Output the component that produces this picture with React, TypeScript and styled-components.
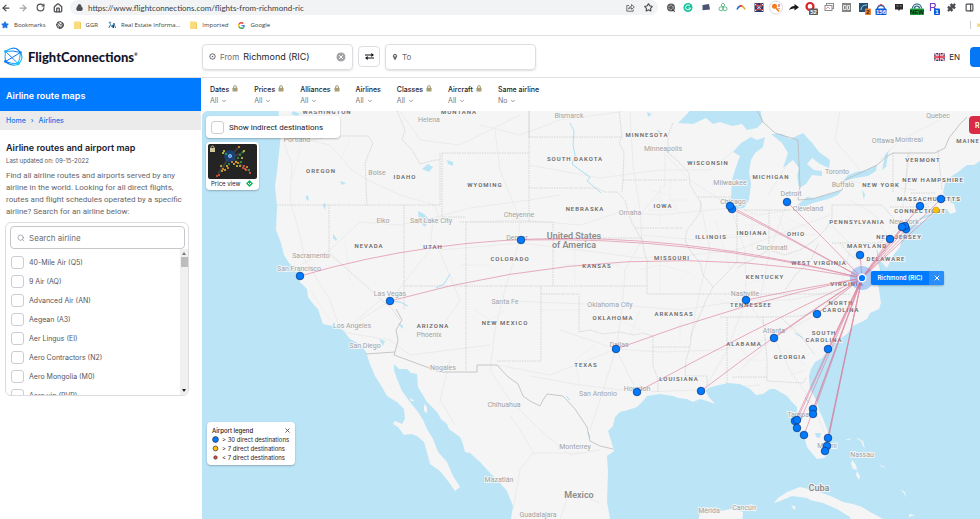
import React from "react";
import styled, { createGlobalStyle, css } from "styled-components";
import {
  ArrowLeft, ArrowRight, RotateCw, House, Lock, Star, Search, ChevronDown, X,
  CircleX, Puzzle, PanelRight, Earth,
} from "lucide-react";

const GlobalStyle = createGlobalStyle`
  *, *::before, *::after { box-sizing: border-box; }
  body { margin: 0; background: #fff; font-family: Inter, "Liberation Sans", sans-serif; color: #22222c; overflow: hidden; }
  button, input { font: inherit; color: inherit; margin: 0; padding: 0; border: 0; background: none; }
  button { cursor: pointer; }
  a { color: inherit; text-decoration: none; }
  h1, h2, p, ul { margin: 0; padding: 0; }
  ul { list-style: none; }
`;

const Page = styled.div`
  display: flex;
  flex-direction: column;
  height: 100vh;
  overflow: hidden;
`;

/* ---------- browser chrome ---------- */

const AddressRow = styled.div`
  display: flex;
  align-items: center;
  height: 15px;
  flex: none;
`;

const NavButtons = styled.div`
  display: grid;
  grid-template-columns: repeat(4, 1fr);
  width: 70px;
  margin-left: -3px;
`;

const IconButton = styled.button`
  display: flex;
  align-items: center;
  justify-content: center;
  color: ${(p) => p.color || "#4a4d51"};
`;

const AddressPill = styled.div`
  display: flex;
  align-items: center;
  gap: 5px;
  flex: 1;
  height: 15px;
  margin-left: 3px;
  padding: 0 5px 0 6px;
  border-radius: 8px;
  background: #f1f3f4;
  color: #4a4d51;
`;

const PillActions = styled.div`
  display: flex;
  gap: 9px;
`;

const AddressInput = styled.input`
  flex: 1;
  min-width: 0;
  outline: 0;
  font: 8px Lato, sans-serif;
  color: #3c4043;
`;

const Extensions = styled.div`
  display: grid;
  grid-auto-flow: column;
  grid-auto-columns: 1fr;
  flex: 0 0 316px;
  margin: 0 2px 0 4px;
`;

const BookmarkRow = styled.nav`
  display: flex;
  align-items: center;
  gap: 10px;
  height: 21px;
  flex: none;
  padding-left: 1px;
  border-bottom: 1px solid #dfe1e4;
  font: 6px "Open Sans", sans-serif;
  color: #3c4043;
`;

const Bookmark = styled.a`
  display: flex;
  align-items: center;
  gap: 5px;
`;

const BookmarkEnd = styled.span`
  display: flex;
  align-items: center;
  margin-left: auto;
  height: 8px;
  border-left: 1px solid #c9ccd0;
  padding-left: 6px;
  width: 10px;
  overflow: hidden;
`;

/* ---------- site header ---------- */

const Header = styled.header`
  display: flex;
  align-items: center;
  height: 42px;
  flex: none;
  border-bottom: 1px solid #e2e2e4;
  overflow: hidden;
`;

const Brand = styled.a`
  display: flex;
  align-items: center;
  gap: 5px;
  width: 202px;
  padding-left: 3px;
  flex: none;
  font: 900 13px Lato, sans-serif;
  color: #14142b;
`;

const Trademark = styled.sup`
  font-size: 4px;
  vertical-align: 6px;
`;

const Field = styled.label`
  display: flex;
  align-items: center;
  gap: 4px;
  width: 151px;
  height: 26px;
  padding: 0 5px 0 6px;
  border: 1px solid #dedee2;
  border-radius: 4px;
  box-shadow: 0 1px 2px rgba(0, 0, 0, 0.12);
  font-size: 8px;
  color: #6c6c72;
`;

const FieldInput = styled.input`
  flex: 1;
  min-width: 0;
  outline: 0;
  font-size: 9px;
  color: #25252d;
`;

const SwapButton = styled.button`
  display: flex;
  align-items: center;
  justify-content: center;
  width: 22px;
  height: 21px;
  margin: 0 5px;
  border: 1px solid #dedee2;
  border-radius: 4px;
`;

const Language = styled.button`
  display: flex;
  align-items: center;
  gap: 4px;
  margin-left: auto;
  font-size: 8px;
`;

const AccountButton = styled.button`
  width: 60px;
  height: 20px;
  margin: 0 -50px 0 10px;
  border-radius: 4px;
  background: #0577f5;
`;

/* ---------- body ---------- */

const Body = styled.div`
  display: flex;
  flex: 1;
  min-height: 0;
`;

const Sidebar = styled.aside`
  width: 201px;
  flex: none;
`;

const SidebarTitle = styled.h1`
  display: flex;
  align-items: center;
  height: 33px;
  padding: 2px 6px 0;
  background: #007aff;
  color: #fff;
  font-size: 9px;
  font-weight: 600;
`;

const Breadcrumb = styled.nav`
  display: flex;
  align-items: center;
  gap: 5px;
  height: 19px;
  padding: 0 6px;
  background: #ebebeb;
  color: #1673e8;
  font-size: 7px;
  font-weight: 500;
`;

const Intro = styled.section`
  padding: 12px 6px 4px;
`;

const IntroTitle = styled.h2`
  font-size: 9px;
  line-height: 12px;
  font-weight: 600;
`;

const Updated = styled.p`
  margin-top: 2px;
  font-size: 6px;
  line-height: 10px;
  color: #55555c;
`;

const Lead = styled.p`
  margin-top: 4px;
  font: 8px/12px Roboto, sans-serif;
  white-space: nowrap;
  color: #66666c;
`;

const Picker = styled.section`
  margin: 0 12px 0 5px;
  height: 174px;
  display: flex;
  flex-direction: column;
  border: 1px solid #dcdce0;
  border-radius: 6px;
  overflow: hidden;
`;

const SearchBox = styled.label`
  display: flex;
  align-items: center;
  gap: 4px;
  flex: none;
  height: 23px;
  margin: 3px 3px 0 4px;
  padding: 0 6px;
  border: 1px solid #c6c6cb;
  border-radius: 4px;
  color: #8a8a90;
`;

const SearchInput = styled.input`
  flex: 1;
  min-width: 0;
  outline: 0;
  font-size: 8px;
  &::placeholder { color: #6e6e74; opacity: 1; }
`;

const PickerBody = styled.div`
  display: flex;
  flex: 1;
  min-height: 0;
`;

const AirlineList = styled.ul`
  flex: 1;
  overflow: hidden;
  padding: 4px 0 0 5px;
`;

const CheckRow = styled.label`
  display: flex;
  align-items: center;
  gap: 5px;
  height: 19px;
  font-size: 7px;
  color: #55555c;
`;

const Checkbox = styled.input.attrs({ type: "checkbox" })`
  appearance: none;
  flex: none;
  width: 13px;
  height: 13px;
  border: 1px solid #cdcdd2;
  border-radius: 3px;
  background: #fff;
  &:checked { background: #007aff; }
`;

const ScrollTrack = styled.div`
  display: flex;
  flex-direction: column;
  align-items: center;
  width: 8px;
  padding: 3px 0;
  background: #f0f0f0;
`;

const ScrollThumb = styled.div`
  width: 7px;
  height: 10px;
  margin: 2px 0 auto;
  background: #bdbdbd;
`;

const Main = styled.main`
  display: flex;
  flex-direction: column;
  flex: 1;
  min-width: 0;
`;

const FilterBar = styled.div`
  display: flex;
  gap: 16px;
  height: 33px;
  flex: none;
  padding: 7px 9px 0;
`;

const FilterButton = styled.button`
  display: flex;
  flex-direction: column;
  align-items: flex-start;
  font-size: 7px;
  line-height: 10px;
  font-weight: 500;
  white-space: nowrap;
`;

const FilterName = styled.span`
  display: flex;
  gap: 3px;
`;

const FilterValue = styled.span`
  display: flex;
  align-items: center;
  gap: 3px;
  line-height: 12px;
  font-weight: 400;
  color: #77777d;
`;

const MapArea = styled.div`
  position: relative;
  flex: 1;
  min-height: 0;
  margin-left: 1px;
  overflow: hidden;
  border-top-left-radius: 6px;
  background: #bbe5f6;
`;

const MapCanvas = styled.svg`
  display: block;
  width: 100%;
  height: 100%;
  font-family: Roboto, sans-serif;
`;

const floating = css`
  position: absolute;
  background: #fff;
  border-radius: 4px;
  box-shadow: 0 1px 2px rgba(0, 0, 0, 0.25);
`;

const IndirectToggle = styled.label`
  ${floating}
  top: 5px;
  left: 4px;
  display: flex;
  align-items: center;
  gap: 5px;
  width: 134px;
  height: 22px;
  padding-left: 5px;
  font: 8px Roboto, sans-serif;
`;

const PriceCard = styled.button`
  ${floating}
  top: 31px;
  left: 4px;
  width: 53px;
  padding: 2px;
  font-size: 6px;
`;

const PriceCaption = styled.span`
  display: flex;
  align-items: center;
  justify-content: space-between;
  height: 9px;
  padding: 0 4px 0 3px;
`;

const PriceThumbnail = styled.svg`
  display: block;
  width: 49px;
  height: 35px;
`;

const Legend = styled.section`
  ${floating}
  left: 5px;
  top: 311px;
  width: 88px;
  padding: 3px 4px 3px 5px;
  font-size: 6px;
`;

const LegendHead = styled.div`
  display: flex;
  justify-content: space-between;
  align-items: center;
  height: 10px;
  font-weight: 500;
`;

const LegendRow = styled.li`
  display: flex;
  align-items: center;
  gap: 3px;
  height: 9px;
  white-space: nowrap;
`;

const LegendKey = styled.svg`
  width: 7px;
  height: 7px;
  flex: none;
`;

const PinLabel = styled.div`
  position: absolute;
  left: 669px;
  top: 160px;
  display: flex;
  height: 14px;
  border-radius: 2px;
  overflow: hidden;
  background: #007aff;
  color: #fff;
  font-size: 6px;
  font-weight: 600;
  line-height: 14px;
  box-shadow: 0 1px 2px rgba(0, 0, 0, 0.25);
`;

const PinName = styled.span`
  width: 58px;
  text-align: center;
`;

const PinClose = styled.button`
  display: flex;
  align-items: center;
  justify-content: center;
  width: 15px;
  background: #2b8dfa;
`;

const RouteButton = styled.button`
  position: absolute;
  left: 767px;
  top: 5px;
  width: 60px;
  height: 18px;
  padding-left: 6px;
  border-radius: 4px;
  background: #d92b45;
  color: #fff;
  font-size: 7px;
  font-weight: 600;
  text-align: left;
`;

/* ---------- small drawings ---------- */

const Padlock = () => (
  <svg width="6" height="7" viewBox="0 0 6 7">
    <path d="M1.6 3V2a1.4 1.4 0 0 1 2.8 0v1" fill="none" stroke="#a89f78" />
    <rect x=".5" y="2.8" width="5" height="3.7" rx=".5" fill="#a89f78" />
  </svg>
);

const ShareMark = () => (
  <svg width="9" height="9" viewBox="0 0 9 9" fill="none" stroke="#5f6368" strokeWidth=".9">
    <path d="M3 2.500H.8v5.700h6.400V6.500" />
    <path d="M2.500 6Q3 3.500 5.500 3.300V1.500L8.300 4 5.500 6.300V4.800Q3.700 4.800 2.500 6z" strokeLinejoin="round" />
  </svg>
);

const SwapMark = () => (
  <svg width="9" height="7" viewBox="0 0 9 7">
    <path d="M0 2h7M2 5h7" stroke="#111" strokeWidth="1.200" />
    <path d="M6.300 0L9 2 6.300 4zM2.700 3L0 5l2.700 2z" fill="#111" />
  </svg>
);

const Folder = () => (
  <svg width="7" height="8" viewBox="0 0 7 8">
    <path d="M0 .5h5.500L7 1.500V8H0z" fill="#fbdc7c" />
    <path d="M6 1.500h1V8H6z" fill="#efc95c" />
  </svg>
);

const GoogleMark = () => (
  <svg width="7" height="7" viewBox="0 0 48 48">
    <path fill="#EA4335" d="M24 9.500c3.500 0 6.700 1.200 9.200 3.600l6.900-6.900C35.900 2.400 30.500 0 24 0 14.600 0 6.500 5.400 2.600 13.200l8 6.200C12.400 13.700 17.700 9.500 24 9.500z" />
    <path fill="#4285F4" d="M47 24.500c0-1.600-.2-3.100-.4-4.500H24v9h12.900c-.6 3-2.200 5.500-4.700 7.200l7.700 6C44.400 38 47 31.800 47 24.500z" />
    <path fill="#FBBC05" d="M10.500 28.600a14.500 14.500 0 0 1 0-9.200l-8-6.200a24 24 0 0 0 0 21.600z" />
    <path fill="#34A853" d="M24 48c6.500 0 11.900-2.100 15.900-5.800l-7.700-6c-2.200 1.500-4.900 2.300-8.200 2.300-6.300 0-11.600-4.200-13.500-9.900l-8 6.200C6.500 42.600 14.600 48 24 48z" />
  </svg>
);

const PeopleMark = () => (
  <svg width="8" height="8" viewBox="0 0 8 8">
    <g fill="none" stroke="#3a78a8">
      <path d="M.8 7L2.500 3.500 4 6 6 2l1.500 5" />
      <circle cx="2" cy="1.700" r=".7" />
    </g>
    <path d="M4.500 7V4.500L6 3.500V7z" fill="#174a73" />
  </svg>
);

const BrandMark = () => (
  <svg width="20" height="20" viewBox="0 0 20 20">
    <defs>
      <linearGradient id="brand" gradientUnits="userSpaceOnUse" x1="1" y1="3" x2="18" y2="17">
        <stop offset="0" stopColor="#21c8f7" />
        <stop offset=".45" stopColor="#0f6cf4" />
        <stop offset="1" stopColor="#21d3f7" />
      </linearGradient>
    </defs>
    <g fill="none" stroke="url(#brand)">
      <path d="M2.500 4.500Q8 0 13 1.500 18 4 19 10 18.500 15 14.500 17.500 8 19.500 2.500 14.500" strokeWidth="1.200" />
      <path d="M2.500 4.500L15 16.500M2.500 4.500Q1.500 10 2.500 14.500M2.500 14.500L17.500 5.500M17.500 5.500Q17 12 15 16.500M2.500 14.500Q8 17 15 16.500M2.500 4.500Q10 3 17.500 5.500" />
    </g>
    <g fill="#0b7df0">
      <circle cx="2.500" cy="4.500" r="1.400" fill="#1fb4f5" /><circle cx="2.500" cy="14.500" r="1.400" />
      <circle cx="17.500" cy="5.500" r="1.200" /><circle cx="15" cy="16.500" r="1.800" fill="#1fc4f5" />
    </g>
  </svg>
);

const BritishFlag = () => (
  <svg width="11" height="8" viewBox="0 0 11 8">
    <rect width="11" height="8" rx="1" fill="#1f3a7d" />
    <path d="M0 0l11 8M11 0L0 8" stroke="#fff" strokeWidth="1.600" />
    <path d="M0 0l11 8M11 0L0 8" stroke="#d8213b" strokeWidth=".6" />
    <path d="M5.500 0v8M0 4h11" stroke="#fff" strokeWidth="2.600" />
    <path d="M5.500 0v8M0 4h11" stroke="#d8213b" strokeWidth="1.500" />
  </svg>
);

const OriginMark = () => (
  <svg width="7" height="7" viewBox="0 0 7 7" fill="none" stroke="#55555c">
    <circle cx="3.500" cy="3.500" r="2.700" strokeWidth=".9" />
    <circle cx="3.500" cy="3.500" r=".8" fill="#55555c" stroke="none" />
  </svg>
);

const PlaceMark = () => (
  <svg width="6" height="8" viewBox="0 0 6 8">
    <path d="M3 7.500L1.200 4.300a2.200 2.200 0 1 1 3.600 0z" fill="#66666c" />
    <circle cx="3" cy="2.800" r=".9" fill="#fff" />
  </svg>
);

type BadgeProps = { x: number; w: number; fill: string; children: string; ink?: string };
const Badge = ({ x, w, fill, children, ink = "#fff" }: BadgeProps) => (
  <g>
    <rect x={x} y="8.500" width={w} height="6.500" rx=".8" fill={fill} />
    <text x={x + w / 2} y="13.900" textAnchor="middle" fontSize="6" fontWeight="700" fill={ink} fontFamily="Liberation Sans, sans-serif">{children}</text>
  </g>
);

const extensionIcons: { name: string; art: React.ReactNode }[] = [
  { name: "Shutter", art: <g><circle cx="8" cy="7.500" r="4" fill="#5d5d5d" /><circle cx="8" cy="7.500" r="2.200" fill="none" stroke="#ddd" strokeDasharray="1.200 1" /><path d="M9 10l3 1.500" stroke="#333" /></g> },
  { name: "Grammar", art: <g><circle cx="8" cy="7.500" r="4.500" fill="#15c39a" /><path d="M10 5.800A2.500 2.500 0 1 0 10.500 8H8.500" fill="none" stroke="#fff" /></g> },
  { name: "Notes", art: <path d="M4.500 5l6.500-1 1 5.500-7.500.8z" fill="#4b5472" /> },
  { name: "Rings", art: <g fill="none" stroke="#3faa72" strokeWidth=".8"><path d="M8 3L10 5 8 7 6 5z" /><circle cx="6" cy="8.800" r="2" /><circle cx="10" cy="8.800" r="2" /></g> },
  { name: "Rainbow", art: <g fill="none" strokeWidth="1.600"><path d="M4 9.500Q5 7 7 6" stroke="#1d6fd6" /><path d="M6.500 6.300Q8 5.500 9.500 6.300" stroke="#e33" /><path d="M9.300 6.200Q11 7 12 9.500" stroke="#f0a325" /></g> },
  { name: "Grid", art: <g><rect x="3.500" y="3" width="9" height="9" fill="#243a72" /><path d="M4 4l8 7M12 4l-8 7" stroke="#f1f1f1" /><path d="M4 5.500h8M4 9.500h8M6 3v9M10 3v9" stroke="#d8443c" strokeDasharray="2 1" /></g> },
  { name: "Key", art: <g><circle cx="8" cy="7.500" r="6.500" fill="#fff" stroke="#dadada" /><circle cx="6.500" cy="6.300" r="2.500" fill="#f47b15" /><path d="M8 8l3 3.500" stroke="#f47b15" strokeWidth="1.700" /><path d="M11 4v3M11 8v1" stroke="#d33" /></g> },
  { name: "Forward", art: <path d="M3 10q1.500-4 5.500-4V4l4.500 3.300-4.500 3.200v-2Q5 8.300 3 10z" fill="#1b1b1b" /> },
  { name: "Blocker", art: <g><circle cx="7" cy="6.500" r="3.500" fill="none" stroke="#d8232a" strokeWidth="2.200" /><Badge x={6} w={9} fill="#5a5a5a">52</Badge></g> },
  { name: "Gallery", art: <g fill="#fff" stroke="#8b8b8b"><rect x="5.500" y="3.500" width="7" height="5" /><rect x="4" y="5.500" width="7" height="5" /><path d="M5 9l2-2 2 2" stroke="#d99" /></g> },
  { name: "Pages", art: <g><rect x="4" y="3" width="9" height="9" fill="#858585" /><path d="M5.500 5.500h2.500v4H5.500zM9.500 5.500h2v4h-2z" fill="none" stroke="#e6e6e6" /></g> },
  { name: "Contacts", art: <g><rect x="3" y="3" width="9" height="9" fill="#22506f" /><path d="M5 10q0-5 6-5" fill="none" stroke="#9fd0e8" /><Badge x={9} w={6} fill="#f08030" ink="#222">2</Badge></g> },
  { name: "Vault", art: <g><path d="M4.500 9a3.500 3.500 0 0 1 7 0" fill="none" stroke="#1a66d6" strokeWidth="1.500" /><path d="M5 6.500Q8 2.500 11 6.500" fill="none" stroke="#d33b3b" /><Badge x={2.5} w={11} fill="#0b5cd8">156</Badge></g> },
  { name: "Screen", art: <g><path d="M4 4h8v5.500H9L8 11 7 9.500H4z" fill="#2b2b2b" /><path d="M5.500 6h2M9 6h1.500" stroke="#999" /></g> },
  { name: "Signal", art: <g><path d="M3.500 8.500a4.500 4.500 0 0 1 9 0M5.500 8.500a2.500 2.500 0 0 1 5 0" fill="none" stroke="#165c7a" strokeWidth="1.200" /><Badge x={1} w={14} fill="#18953b" ink="#0a1f10">NEW</Badge></g> },
  { name: "Reader", art: <g><path d="M4.500 11V3.500h4q2 2-.5 4h-3M8 7.500l3 3.500" fill="none" stroke="#7a3fc4" strokeWidth="1.200" /><Badge x={8} w={6} fill="#0b5cd8">1</Badge></g> },
];

const Extension = styled(IconButton)`
  svg { overflow: visible; }
`;

/* ---------- map data ---------- */

const PACIFIC = "M100 100H278L279 120 281 134 279 153 277 172 275 186 276 196 277 207 276 230 281 243 284 255 289 263 297 270 300 282 307 289 308 297 314 305 318 309 323 324 333 326 343 330 350 339 360 344 366 352 370 364 375 376 382 387 387 396 397 402 404 409 405 419 402 424 395 421 393 424 398 427 404 435 411 434 417 436 424 442 428 456 430 464 440 471 448 481 455 491 460 487 453 476 447 462 438 452 433 439 427 429 423 420 418 412 410 402 402 391 397 379 394 370 394 364 399 369 407 369 411 373 417 374 418 387 427 402 437 412 441 419 447 424 449 429 460 437 463 444 465 452 470 453 480 462 493 476 501 484 507 491 513 506 511 519V700H100Z";
const ATLANTIC = "M610 519L607 502 608 472 607 456 614 451 610 437 608 431 613 426 615 417 620 412 628 410 637 407 643 401 647 396 660 394 673 396 678 398 687 399 693 402 700 399 707 401 715 404 708 396 706 391 708 388 715 386 728 383 740 384 750 389 756 395 763 394 770 389 775 389 787 396 792 402 797 407 797 419 800 431 805 439 807 447 810 451 817 459 824 458 828 454 829 442 828 432 822 416 819 410 817 402 810 389 809 376 811 369 815 362 822 358 827 352 835 342 847 334 853 326 867 319 870 313 879 309 881 303 879 290 877 278 880 270 878 257 884 265 887 268 892 257 900 247 903 233 908 227 913 223 920 218 933 212 947 209 950 214 956 212 954 204 949 202 943 193 945 183 953 175 958 172 967 165 974 165 980 161 2400 150V900H610Z";
const ISLANDS = [
  "M698 521L700 514 720 511 731 509 743 512 742 525Z",
  "M774 503L778 498 787 492 800 487 817 491 833 497 843 502 853 504 862 507 870 512 883 519 900 530H853L850 517 837 509 823 503 810 500 807 498 792 496 780 501Z",
  "M791 505l5 2-2 3z", "M852 460l4 5 1 5-4-1-2-5z", "M857 471l3 5-1 4-3-5z", "M845 440l7-2-3 2zM857 438l6 3 2 8-2-3-2-5-4-2zM878 463l4 4 5 1-5-2zM900 489l5 3 1 6-2-5zM909 514l6 1-6 2z",
  "M909 226L920 220 934 215 922 222Z", "M410 398l5 3-4 0zM424 404l3 3 0 6-3-2z",
];
const LAKES = [
  "M678 123L688 113 698 100H758L763 122 757 128 747 130 742 124 732 126 720 122 713 124 706 118 693 124Z",
  "M733 152L741 143 751 137 757 140 765 137 763 147 755 153 751 160 749 172 751 184 749 200 744 208 735 209 731 198 732 180 735 170 740 156Z",
  "M771 134L782 134 790 139 803 133 813 144 819 152 830 160 829 168 820 164 812 158 807 164 814 170 822 171 822 176 812 175 806 184 799 188 797 176 799 168 793 160 783 168 788 153 782 143Z",
  "M795 207L801 202 807 197 815 198 825 195 842 190 838 195 828 199 813 203 802 208Z",
  "M843 181L848 175 856 172 866 170 877 165 876 171 868 176 856 178Z",
  "M422 169l6-5 5 3-4 5zM306 195l3 2-1 4-2-2zM324 203l2 1-1 6-2-4zM333 234l4 5-1 2-3-3zM447 160l6 2 0 4-5-2zM340 181l6 2-4 2zM418 211l6 3 5 5-4 8-6-6zM293 111l8 3-5 2-5-2zM647 112l5 2-4 3zM657 130l4 1-2 3zM379 339l6 2-2 5zM398 322l5 4 0 3-3-3zM815 433l6 0-1 5-4-1z",
  "M882 170L885 155 889 150 886 167ZM862 190l3 4-1 6-1-4z",
];
const RIVERS = "M570 123l4 8-1 14 2 10-3 9 8 6 10 7-3 4 5 4 9 8M450 274l-6 10-8 4M390 301l10 1 8 4M795 333l8 5M566 396l4 4M588 432l2 6M877 250l2 14 3 8M805 397l4 6";
const STATES = "M283 135L313 140 330 136H368L373 143 365 163 367 205M277 205H440V205M329 205V253L392 309 400 320M404 205V309M404 286H647M440 205V153M397 111L405 130 402 140 412 150 420 164 435 160 440 160M442 153H529M442 153V217H466M529 100V222M460 222H553V286M466 222V286M529 137H622M618 100L622 137 619 143 624 152 623 180 622 192M529 188H597L605 192 617 192 625 200 628 212 632 223 642 240 645 255 647 260V294H703M466 286V371M541 286V361H497M541 294H579V332L590 330 603 334 620 332 634 335 643 333 653 336V366L658 379V392M553 238H642M623 180H688M673 123L668 135 668 153 677 160 689 173 690 185 701 203 700 213 687 230 685 240 690 250 700 263 703 275 713 287 706 300 703 308 692 332 690 347 686 360 685 376H707V385M653 347H690M635 228H683M698 197H733M529 111V137M737 213V262L725 275 713 287M769 210V250L755 258 737 268M769 250L785 255 800 250 815 240 826 229 832 218V205H882L895 220M832 243H885V260M744 210H790M703 294H850M720 317H780L800 316 815 312M727 317V384M763 317L767 359V381L803 383 806 378M733 377H767M780 317L800 335 815 355M880 243L888 236M818 244L810 262 795 275 785 290M893 153V193M908 153L905 193M911 193H935M890 207H930M938 150L942 190M840 243L850 255 862 262";
const BORDERS = "M366 354L395 352 394 355 432 369 440 372H477V365H497L507 376 518 384 523 396 530 401 540 406 543 400 547 394 563 396 575 409 587 427 590 441 600 446 613 449M395 352L398 340 396 330 402 320 396 309M752 100L763 122 775 133 798 140 800 187 798 200 812 199 842 190 845 180 877 165 886 157 893 153H935L945 148 949 138 960 124 967 117";
const ROADS = "M283 140L292 165 290 200 300 235 305 260 330 300 340 330M285 135L330 145 352 170 368 180 400 195 435 205 440 222M300 265L330 250 360 222 400 225 425 220 470 208 529 200 560 195M433 220L430 250 410 275 390 301 360 320M330 330L390 340 410 355 450 350 490 345M340 335L380 300M480 125L520 135 560 120 620 112M400 111L420 140 460 145 520 115M495 130L500 170 520 220 518 245 505 290 495 330 490 370 510 400 540 430 570 455 600 450M470 222L520 220 580 225 620 212 660 215 730 208M440 250L520 243 580 250 640 258 690 255 737 250 790 230 830 215M529 165L600 178 660 170 710 170 735 150M630 112L633 165 640 210 642 240 625 270 622 310 616 349 600 400 590 430M490 300L560 303 620 305 680 310 746 300 790 300 840 290M560 330L616 349 660 352 720 350 774 338 817 314 862 278M497 365L550 375 616 349M530 376L580 385 637 392 700 390 760 385M616 349L637 392M663 152L690 180 730 206 760 215 800 208M730 206L745 250 746 300 727 350 705 388M768 195L790 160 785 140M640 215L665 185 665 155M700 200L710 250 700 290 690 340M774 338L790 370 810 400 828 440M746 300L774 338 740 370M787 202L770 250 760 300M832 225L860 255 900 228 920 206 941 199M842 180L880 185 915 190M850 250L840 290 817 314M880 160L900 140 940 120M860 170L835 140 840 111M900 228L905 190 910 150M890 240L875 215 850 200M640 235L700 240 760 235M435 240L460 300 440 330M513 510L520 470 533 453 580 453M535 455L520 430 510 415M560 519L570 490 600 503M450 360L440 400 455 425M333 111L300 113";
const DETAIL = "M650 190l20 5 10 20M660 185v40M670 180v30M650 200h40M648 210h30M715 220l10 30 5 20M710 235h25M745 225h24M752 213v45M778 215l12 30M775 235h40M790 220l25 10M640 270l20-5 30 8M660 255v40M620 320l20 10M595 345l-20 15 5 25M680 320v20M735 340l15 20M735 360h30M785 350l20 15M790 375l15-5M720 300l20 10M845 225h30M845 215l25 15M640 310l-10 25M540 310h40M475 310l15 10 15-10M460 265h30M560 265h60M575 245v40M480 180l20 8M350 140l-10 20M300 150l-8 30M345 240l5 40M310 290l20 30M780 265l20-12M745 285l30-12";

const RIC = { x: 862, y: 278 };
type Stop = { x: number; y: number; lift?: number; cx?: number };
const stops: Stop[] = [
  { x: 300, y: 276, cx: 560, lift: 200 }, { x: 390, y: 301, cx: 630, lift: 234 }, { x: 521, y: 240, cx: 690, lift: 236 },
  { x: 616, y: 349, cx: 742, lift: 302 }, { x: 637, y: 392, cx: 755, lift: 328 }, { x: 701, y: 391, cx: 782, lift: 329 },
  { x: 746, y: 300 }, { x: 774, y: 338 }, { x: 817, y: 314 }, { x: 828, y: 349 }, { x: 787, y: 202 },
  { x: 732, y: 209 }, { x: 730, y: 206 }, { x: 860, y: 255 }, { x: 890, y: 239 }, { x: 906, y: 229 }, { x: 905, y: 226 }, { x: 902, y: 227 },
  { x: 920, y: 206 }, { x: 941, y: 199 }, { x: 813, y: 409 }, { x: 813, y: 414 }, { x: 795, y: 421 }, { x: 797, y: 420 },
  { x: 797, y: 428 }, { x: 804, y: 435 }, { x: 828, y: 438 }, { x: 827, y: 446 }, { x: 825, y: 451 },
];

const routePath = (s: Stop) =>
  `M${s.x} ${s.y}Q${s.cx ?? (s.x + RIC.x) / 2} ${s.lift ?? (s.y + RIC.y) / 2 - 1} ${RIC.x} ${RIC.y}`;

type Label = [number, number, string];
const stateLabels: Label[] = [
  [327, 114, "WASHINGTON"], [459, 114, "MONTANA"], [321, 173, "OREGON"], [405, 179, "IDAHO"], [485, 187, "WYOMING"],
  [575, 161, "SOUTH DAKOTA"], [647, 137, "MINNESOTA"], [708, 165, "WISCONSIN"], [771, 179, "MICHIGAN"], [881, 187, "NEW YORK"],
  [923, 162, "VERMONT"], [933, 182, "NEW HAMPSHIRE"], [929, 201, "MASSACHUSETTS"], [920, 213, "CONNECTICUT"], [968, 143, "MAINE"],
  [585, 211, "NEBRASKA"], [663, 208, "IOWA"], [369, 248, "NEVADA"], [433, 249, "UTAH"], [510, 261, "COLORADO"], [597, 268, "KANSAS"],
  [672, 260, "MISSOURI"], [711, 239, "ILLINOIS"], [752, 235, "INDIANA"], [796, 236, "OHIO"], [857, 224, "PENNSYLVANIA"],
  [867, 248, "MARYLAND"], [899, 239, "NEW JERSEY"], [886, 261, "DELAWARE"], [819, 265, "WEST VIRGINIA"], [765, 279, "KENTUCKY"],
  [847, 286, "VIRGINIA"], [751, 307, "TENNESSEE"], [841, 305, "NORTH"], [841, 312, "CAROLINA"], [433, 328, "ARIZONA"],
  [505, 325, "NEW MEXICO"], [613, 320, "OKLAHOMA"], [674, 316, "ARKANSAS"], [586, 367, "TEXAS"], [679, 381, "LOUISIANA"],
  [744, 346, "ALABAMA"], [790, 359, "GEORGIA"], [824, 335, "SOUTH"], [824, 342, "CAROLINA"],
];
const cityLabels: Label[] = [
  [429, 122, "Helena"], [297, 142, "Portland"], [377, 175, "Boise"], [569, 118, "Bismarck"], [663, 151, "Minneapolis"], [730, 185, "Milwaukee"],
  [938, 118, "Quebec"], [883, 143, "Ottawa"], [909, 142, "Montreal"], [837, 174, "Toronto"], [843, 187, "Buffalo"], [791, 196, "Detroit"],
  [808, 211, "Cleveland"], [733, 204, "Chicago"], [904, 224, "New York"], [772, 250, "Cincinnati"], [745, 296, "Nashville"], [383, 223, "Elko"],
  [431, 223, "Salt Lake City"], [519, 217, "Cheyenne"], [517, 240, "Denver"], [630, 215, "Omaha"], [311, 258, "Sacramento"],
  [299, 271, "San Francisco"], [390, 296, "Las Vegas"], [505, 304, "Santa Fe"], [610, 307, "Oklahoma City"], [352, 328, "Los Angeles"],
  [365, 348, "San Diego"], [429, 337, "Phoenix"], [443, 370, "Nogales"], [619, 347, "Dallas"], [637, 391, "Houston"], [598, 396, "San Antonio"],
  [504, 407, "Chihuahua"], [575, 449, "Monterrey"], [499, 482, "Mazatlán"], [538, 517, "Guadalajara"], [774, 333, "Atlanta"],
  [798, 417, "Tampa"], [827, 448, "Miami"], [862, 457, "Nassau"], [744, 510, "Cancún"], [709, 513, "Mérida"],
];
const countryLabels: Label[] = [[574, 239, "United States"], [574, 248, "of America"], [579, 498, "Mexico"], [819, 491, "Cuba"]];

const MapLabel = styled.text<{ $kind: "state" | "city" | "country" }>`
  text-anchor: middle;
  paint-order: stroke;
  stroke: rgba(247, 247, 247, 0.9);
  stroke-width: 2px;
  stroke-linejoin: round;
  ${(p) => p.$kind === "state" && css`font-size: 6px; font-weight: 600; letter-spacing: 1px; fill: #6a6a6a;`}
  ${(p) => p.$kind === "city" && css`font-size: 7px; fill: #a3a3a3;`}
  ${(p) => p.$kind === "country" && css`font-size: 9px; font-weight: 600; fill: #8c8c8c;`}
`;

const RouteMap = () => (
  <MapCanvas role="img" aria-label="Direct flights from Richmond">
    <g transform="translate(-202 -111)">
      <rect x="100" y="100" width="2400" height="800" fill="#f5f5f5" />
      <g fill="none" strokeLinejoin="round">
        <path d={DETAIL} stroke="#efefef" />
        <path d={ROADS} stroke="#ebebeb" />
      </g>
      <g fill="#bbe5f6">
        <path d={PACIFIC} /><path d={ATLANTIC} />
        {LAKES.map((d) => <path key={d} d={d} />)}
      </g>
      {ISLANDS.map((d) => <path key={d} d={d} fill="#f5f5f5" />)}
      <path d={RIVERS} fill="none" stroke="#aadff5" />
      <path d={STATES} fill="none" stroke="#c9c9c9" strokeDasharray="1.500 1" strokeWidth=".7" />
      <path d={BORDERS} fill="none" stroke="#bababa" strokeWidth=".8" />
      {cityLabels.map(([x, y, t]) => <MapLabel key={t} $kind="city" x={x} y={y}>{t}</MapLabel>)}
      {stateLabels.map(([x, y, t]) => <MapLabel key={t + y} $kind="state" x={x} y={y}>{t}</MapLabel>)}
      {countryLabels.map(([x, y, t]) => <MapLabel key={t} $kind="country" x={x} y={y}>{t}</MapLabel>)}
      <circle cx={RIC.x} cy={RIC.y} r="12" fill="#3c8cf5" opacity=".38" />
      <g fill="none" stroke="#d9698b" strokeWidth=".7" opacity=".75">
        {stops.map((s) => <path key={`${s.x}-${s.y}`} d={routePath(s)} />)}
        <path d={`M936 210L${RIC.x} ${RIC.y}`} />
      </g>
      <circle cx="936" cy="210" r="3" fill="#ffc107" stroke="#c79a1c" strokeWidth=".6" />
      <g fill="#007aff" stroke="#123f86" strokeWidth=".8">
        {stops.map((s) => <circle key={`${s.x}-${s.y}`} cx={s.x} cy={s.y} r="3.800" />)}
      </g>
      <circle cx={RIC.x} cy={RIC.y} r="3.800" fill="#007aff" stroke="#fff" strokeWidth="1.400" />
    </g>
  </MapCanvas>
);

const priceDots: [number, number, string][] = [
  [31, 3, "#f39b2d"], [16, 7, "#d8e03a"], [18, 10, "#2fae4a"], [15, 9, "#d8e03a"], [35, 8, "#2fae4a"], [36, 7, "#e0d337"], [32, 11, "#2fae4a"], [34, 14, "#e0d337"], [30, 14, "#2fae4a"],
  [28, 18, "#f2c230"], [26, 20, "#f2c230"], [30, 19, "#f39b2d"], [33, 18, "#2fae4a"], [32, 22, "#f2c230"], [29, 22, "#e0d337"], [24, 18, "#f39b2d"],
  [35, 24, "#f0583f"], [37, 25, "#f0583f"], [39, 23, "#f39b2d"], [38, 26, "#f0583f"], [41, 26, "#2fae4a"], [42, 29, "#f0583f"], [36, 22, "#f0583f"],
  [13, 22, "#f2c230"], [15, 25, "#f39b2d"], [14, 27, "#f2c230"], [17, 26, "#f2c230"], [20, 24, "#f39b2d"], [19, 22, "#e0d337"], [9, 32, "#f0583f"], [11, 31, "#f0583f"], [21, 20, "#2fae4a"],
];

const PriceThumb = () => (
  <PriceThumbnail viewBox="0 0 49 35">
    <rect width="49" height="35" rx="2" fill="#242424" />
    <path d="M10 30L22 12 42 28M16 8L24 13 36 8M31 3L22 12 14 25" stroke="#3c3c3c" fill="none" strokeWidth="2" />
    <circle cx="22" cy="12" r="6" fill="#1c4380" opacity=".8" />
    <circle cx="22" cy="12" r="1.600" fill="#3aa0ff" stroke="#bfe0ff" strokeWidth=".6" />
    {priceDots.map(([x, y, c]) => <circle key={`${x}-${y}`} cx={x} cy={y} r="1" fill={c} />)}
    <path d="M3 4.500V3.500a1.500 1.500 0 0 1 3 0v1" fill="none" stroke="#cfc79d" />
    <rect x="2" y="4" width="5" height="4" fill="#cfc79d" />
  </PriceThumbnail>
);

const filters = [
  { name: "Dates", value: "All", locked: true }, { name: "Prices", value: "All", locked: true },
  { name: "Alliances", value: "All", locked: true }, { name: "Airlines", value: "All", locked: false },
  { name: "Classes", value: "All", locked: true }, { name: "Aircraft", value: "All", locked: true },
  { name: "Same airline", value: "No", locked: false },
];

const airlines = [
  "40-Mile Air (Q5)", "9 Air (AQ)", "Advanced Air (AN)", "Aegean (A3)", "Aer Lingus (EI)",
  "Aero Contractors (N2)", "Aero Mongolia (M0)", "Aero vip (RVP)",
];

const legend = [
  { text: "> 30 direct destinations", fill: "#007aff", r: 2.9 },
  { text: "> 7 direct destinations", fill: "#ffc107", r: 2.4 },
  { text: "< 7 direct destinations", fill: "#f0452f", r: 1.7 },
];

export default function App() {
  return (
    <Page>
      <GlobalStyle />
      <AddressRow>
        <NavButtons>
          <IconButton aria-label="Back"><ArrowLeft size={10} strokeWidth={3} /></IconButton>
          <IconButton aria-label="Forward" color="#a0a3a7"><ArrowRight size={10} strokeWidth={3} /></IconButton>
          <IconButton aria-label="Reload"><RotateCw size={9} strokeWidth={3} /></IconButton>
          <IconButton aria-label="Home page"><House size={10} strokeWidth={3} /></IconButton>
        </NavButtons>
        <AddressPill>
          <Lock size={7} strokeWidth={3} fill="#4a4d51" />
          <AddressInput aria-label="Address" defaultValue="https://www.flightconnections.com/flights-from-richmond-ric" />
          <PillActions>
            <IconButton aria-label="Share"><ShareMark /></IconButton>
            <IconButton aria-label="Bookmark this page"><Star size={9} strokeWidth={3} /></IconButton>
          </PillActions>
        </AddressPill>
        <Extensions>
          {extensionIcons.map((e) => (
            <Extension key={e.name} aria-label={e.name}>
              <svg width="16" height="15" viewBox="0 0 16 15">{e.art}</svg>
            </Extension>
          ))}
          <Extension aria-label="Extensions"><Puzzle size={9} fill="#4a4d51" /></Extension>
          <Extension aria-label="Side panel"><PanelRight size={9} strokeWidth={3} /></Extension>
        </Extensions>
      </AddressRow>
      <BookmarkRow aria-label="Bookmarks">
        <Bookmark href="#"><Star size={8} color="#1a73e8" fill="#1a73e8" />Bookmarks</Bookmark>
        <Bookmark href="#" aria-label="Globe"><Earth size={8} strokeWidth={3} /></Bookmark>
        <Bookmark href="#"><Folder />GGR</Bookmark>
        <Bookmark href="#"><PeopleMark />Real Estate Informa...</Bookmark>
        <Bookmark href="#"><Folder />Imported</Bookmark>
        <Bookmark href="#"><GoogleMark />Google</Bookmark>
        <BookmarkEnd><Folder /></BookmarkEnd>
      </BookmarkRow>

      <Header>
        <Brand href="#"><BrandMark /><span>FlightConnections<Trademark>®</Trademark></span></Brand>
        <Field>
          <OriginMark />From
          <FieldInput defaultValue="Richmond (RIC)" />
          <IconButton aria-label="Clear origin" color="#fff"><CircleX size={12} fill="#a2a2a6" /></IconButton>
        </Field>
        <SwapButton aria-label="Swap"><SwapMark /></SwapButton>
        <Field><PlaceMark />To<FieldInput /></Field>
        <Language><BritishFlag />EN</Language>
        <AccountButton aria-label="Account" />
      </Header>

      <Body>
        <Sidebar>
          <SidebarTitle>Airline route maps</SidebarTitle>
          <Breadcrumb aria-label="Breadcrumb"><a href="#">Home</a><span>›</span><a href="#">Airlines</a></Breadcrumb>
          <Intro>
            <IntroTitle>Airline routes and airport map</IntroTitle>
            <Updated>Last updated on: 09-15-2022</Updated>
            <Lead>
              Find all airline routes and airports served by any<br />
              airline in the world. Looking for all direct flights,<br />
              routes and flight schedules operated by a specific<br />
              airline? Search for an airline below:
            </Lead>
          </Intro>
          <Picker>
            <SearchBox><Search size={8} /><SearchInput aria-label="Search airline" placeholder="Search airline" /></SearchBox>
            <PickerBody>
              <AirlineList>
                {airlines.map((a) => <li key={a}><CheckRow><Checkbox />{a}</CheckRow></li>)}
              </AirlineList>
              <ScrollTrack>
                <svg width="4" height="3" viewBox="0 0 4 3"><path d="M0 3l2-3 2 3z" fill="#777" /></svg>
                <ScrollThumb />
                <svg width="4" height="3" viewBox="0 0 4 3"><path d="M0 0l2 3 2-3z" fill="#222" /></svg>
              </ScrollTrack>
            </PickerBody>
          </Picker>
        </Sidebar>

        <Main>
          <FilterBar>
            {filters.map((f) => (
              <FilterButton key={f.name}>
                <FilterName>{f.name}{f.locked && <Padlock />}</FilterName>
                <FilterValue>{f.value}<ChevronDown size={6} strokeWidth={3} /></FilterValue>
              </FilterButton>
            ))}
          </FilterBar>
          <MapArea>
            <RouteMap />
            <IndirectToggle><Checkbox />Show indirect destinations</IndirectToggle>
            <PriceCard>
              <PriceThumb />
              <PriceCaption>
                Price view
                <svg width="7" height="7" viewBox="0 0 7 7"><path d="M0 3.500L3.500 0 7 3.500 3.500 7z" fill="#17b15d" /><path d="M2 3l1.500 1.500L5 3" stroke="#fff" fill="none" /></svg>
              </PriceCaption>
            </PriceCard>
            <PinLabel>
              <PinName>Richmond (RIC)</PinName>
              <PinClose aria-label="Remove Richmond"><X size={8} strokeWidth={3} /></PinClose>
            </PinLabel>
            <RouteButton>R</RouteButton>
            <Legend>
              <LegendHead>Airport legend<IconButton aria-label="Close legend"><X size={7} strokeWidth={3} /></IconButton></LegendHead>
              <ul>
                {legend.map((l) => (
                  <LegendRow key={l.text}>
                    <LegendKey viewBox="0 0 7 7"><circle cx="3.500" cy="3.500" r={l.r} fill={l.fill} stroke="#333" strokeWidth=".7" /></LegendKey>
                    {l.text}
                  </LegendRow>
                ))}
              </ul>
            </Legend>
          </MapArea>
        </Main>
      </Body>
    </Page>
  );
}
